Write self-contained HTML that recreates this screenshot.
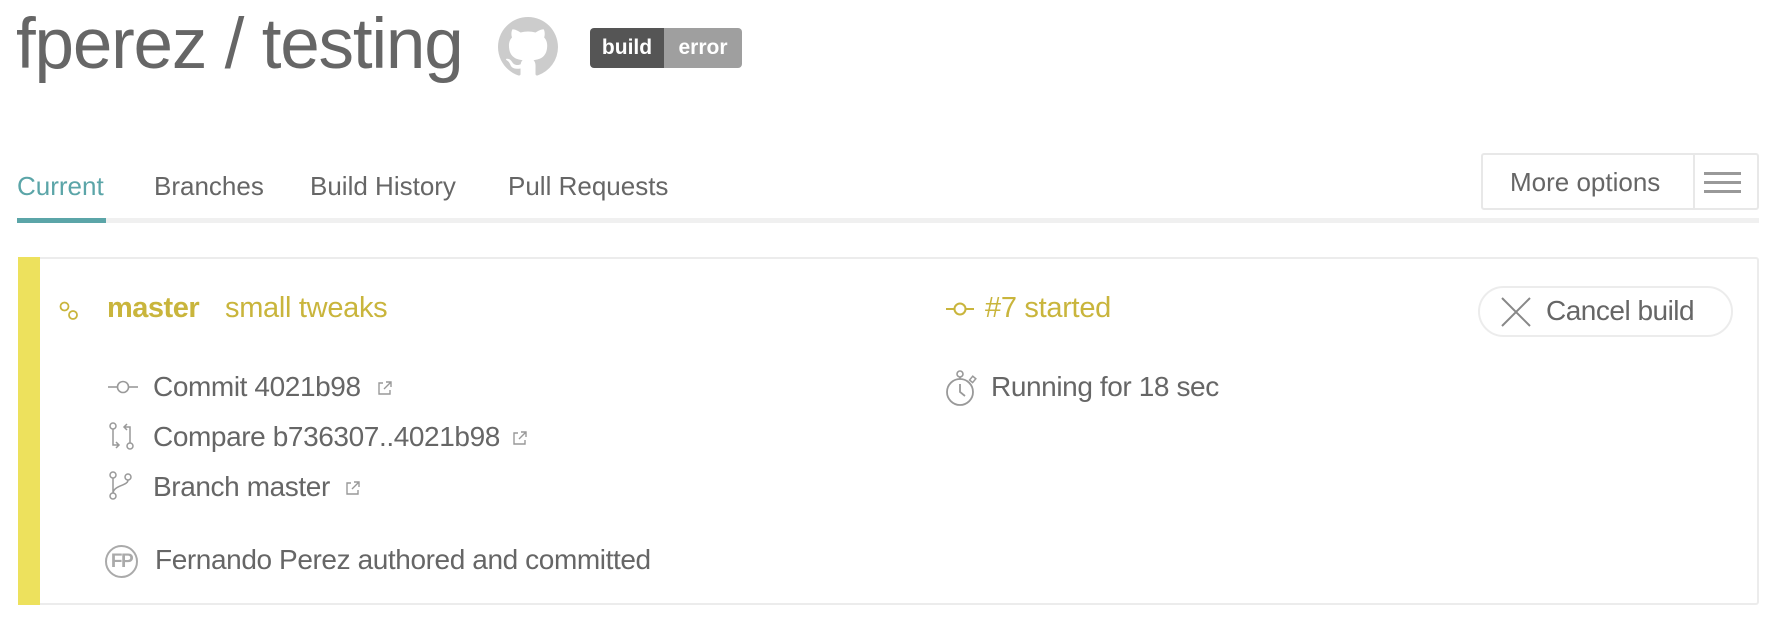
<!DOCTYPE html>
<html><head><meta charset="utf-8"><style>
*{margin:0;padding:0;box-sizing:border-box}
body{width:1774px;height:634px;background:#fff;font-family:"Liberation Sans",sans-serif;color:#666;position:relative;overflow:hidden}
.a{position:absolute;white-space:nowrap}
.t{font-size:26px;letter-spacing:0}
.r{font-size:28px;letter-spacing:-0.4px;color:#666}
</style></head><body>
<div class="a" style="left:16px;top:3px;font-size:71px;letter-spacing:-1.2px;color:#666;line-height:84px">fperez / testing</div>
<svg class="a" style="left:498px;top:17px" width="60" height="60" viewBox="0 0 16 16"><path fill="#ccc" fill-rule="evenodd" d="M8 0C3.58 0 0 3.58 0 8c0 3.54 2.290 6.530 5.470 7.590.4.07.55-.17.55-.38 0-.19-.01-.82-.01-1.49-2.01.37-2.53-.49-2.69-.94-.09-.23-.48-.94-.82-1.13-.28-.15-.68-.52-.01-.53.63-.01 1.080.58 1.230.82.72 1.21 1.870.87 2.330.66.07-.52.28-.87.51-1.07-1.78-.2-3.64-.89-3.64-3.95 0-.87.31-1.59.82-2.15-.08-.2-.36-1.02.08-2.12 0 0 .67-.21 2.2.82.64-.18 1.32-.27 2-.27.68 0 1.36.09 2 .27 1.53-1.04 2.2-.82 2.2-.82.44 1.1.16 1.92.08 2.12.51.56.82 1.27.82 2.15 0 3.07-1.87 3.75-3.65 3.95.29.25.54.73.54 1.48 0 1.07-.01 1.93-.01 2.2 0 .21.15.46.55.38A8.013 8.013 0 0016 8c0-4.42-3.58-8-8-8z"/></svg>
<div class="a" style="left:590px;top:28px;width:152px;height:40px;border-radius:4px;overflow:hidden;display:flex;font-size:21px;font-weight:bold;color:#fff;line-height:40px">
<div style="background:#555;width:74px;text-align:center">build</div><div style="background:#9f9f9f;flex:1;text-align:center">error</div></div>

<div class="a t" style="left:17px;top:171px;color:#5ba5a8">Current</div>
<div class="a t" style="left:154px;top:171px">Branches</div>
<div class="a t" style="left:310px;top:171px">Build History</div>
<div class="a t" style="left:508px;top:171px">Pull Requests</div>
<div class="a" style="left:17px;top:218px;width:1742px;height:5px;background:#f0f0f0"></div>
<div class="a" style="left:17px;top:218px;width:89px;height:5px;background:#5ba5a8"></div>

<div class="a" style="left:1481px;top:153px;width:278px;height:57px;border:2px solid #e8e8e8;border-radius:3px"></div>
<div class="a" style="left:1693px;top:155px;width:2px;height:53px;background:#e8e8e8"></div>
<div class="a t" style="left:1510px;top:167px;color:#666">More options</div>
<div class="a" style="left:1704px;top:172px;width:37px;height:3px;background:#999"></div>
<div class="a" style="left:1704px;top:181px;width:37px;height:3px;background:#999"></div>
<div class="a" style="left:1704px;top:190px;width:37px;height:3px;background:#999"></div>

<div class="a" style="left:18px;top:257px;width:1741px;height:348px;border:2px solid #ececec;border-radius:3px"></div>
<div class="a" style="left:18px;top:257px;width:22px;height:348px;background:#ede15d"></div>

<svg class="a" style="left:58px;top:301px" width="24" height="22"><circle cx="6.5" cy="5.5" r="4" fill="none" stroke="#c9b53c" stroke-width="1.8"/><circle cx="15" cy="14" r="4" fill="none" stroke="#c9b53c" stroke-width="1.8"/></svg>
<div class="a" style="left:107px;top:292px;font-size:29px;font-weight:bold;color:#c9b53c;letter-spacing:-0.5px">master</div>
<div class="a" style="left:225px;top:292px;font-size:29px;color:#c9b53c;letter-spacing:-0.3px">small tweaks</div>

<svg class="a" style="left:945px;top:300px" width="30" height="16"><line x1="1" y1="9" x2="9" y2="9" stroke="#c9b53c" stroke-width="2"/><line x1="21" y1="9" x2="29" y2="9" stroke="#c9b53c" stroke-width="2"/><circle cx="15" cy="9" r="5.5" fill="none" stroke="#c9b53c" stroke-width="2"/></svg>
<div class="a" style="left:985px;top:292px;font-size:29px;color:#c9b53c;letter-spacing:-0.3px">#7 started</div>

<div class="a" style="left:1478px;top:286px;width:255px;height:51px;border:2px solid #ececec;border-radius:26px"></div>
<svg class="a" style="left:1500px;top:296px" width="32" height="32"><path d="M2 2L30 30M30 2L2 30" stroke="#888" stroke-width="2"/></svg>
<div class="a" style="left:1546px;top:295px;font-size:28px;color:#666;letter-spacing:-0.5px">Cancel build</div>

<svg class="a" style="left:107px;top:379px" width="32" height="16"><line x1="1" y1="8" x2="10" y2="8" stroke="#999" stroke-width="1.6"/><line x1="22" y1="8" x2="31" y2="8" stroke="#999" stroke-width="1.6"/><circle cx="16" cy="8" r="5.5" fill="none" stroke="#999" stroke-width="1.6"/></svg>
<div class="a r" style="left:153px;top:371px">Commit 4021b98</div>
<svg class="a" style="left:377px;top:380px" width="16" height="16"><path d="M6 3H2V14H13V10M9 2H14V7M14 2L7 9" fill="none" stroke="#999" stroke-width="1.4"/></svg>

<svg class="a" style="left:108px;top:421px" width="28" height="30"><circle cx="5" cy="5" r="3" fill="none" stroke="#999" stroke-width="1.5"/><circle cx="22" cy="25" r="3" fill="none" stroke="#999" stroke-width="1.5"/><path d="M5 8V24H10M8 21L11 24L8 27M22 22V6H17M19 3L16 6L19 9" fill="none" stroke="#999" stroke-width="1.5"/></svg>
<div class="a r" style="left:153px;top:421px">Compare b736307..4021b98</div>
<svg class="a" style="left:512px;top:430px" width="16" height="16"><path d="M6 3H2V14H13V10M9 2H14V7M14 2L7 9" fill="none" stroke="#999" stroke-width="1.4"/></svg>

<svg class="a" style="left:108px;top:471px" width="28" height="30"><circle cx="5" cy="4" r="3" fill="none" stroke="#999" stroke-width="1.5"/><circle cx="5" cy="25" r="3" fill="none" stroke="#999" stroke-width="1.5"/><circle cx="20" cy="6" r="3" fill="none" stroke="#999" stroke-width="1.5"/><path d="M5 7V22M20 9C20 15 6 14 5 22" fill="none" stroke="#999" stroke-width="1.5"/></svg>
<div class="a r" style="left:153px;top:471px">Branch master</div>
<svg class="a" style="left:345px;top:480px" width="16" height="16"><path d="M6 3H2V14H13V10M9 2H14V7M14 2L7 9" fill="none" stroke="#999" stroke-width="1.4"/></svg>

<div class="a" style="left:105px;top:545px;width:33px;height:33px;border:2px solid #aaa;border-radius:50%;font-size:19px;font-weight:bold;color:#aaa;text-align:center;line-height:29px;letter-spacing:-1.5px">FP</div>
<div class="a r" style="left:155px;top:544px">Fernando Perez authored and committed</div>

<svg class="a" style="left:944px;top:369px" width="36" height="40"><circle cx="16" cy="23" r="13" fill="none" stroke="#999" stroke-width="1.8"/><circle cx="16" cy="5" r="3" fill="none" stroke="#999" stroke-width="1.6"/><path d="M16 8V10M16 15V23L21 27" fill="none" stroke="#999" stroke-width="1.8"/><rect x="27" y="8" width="4" height="5" transform="rotate(40 29 10)" fill="none" stroke="#999" stroke-width="1.5"/></svg>
<div class="a r" style="left:991px;top:371px">Running for 18 sec</div>
</body></html>
